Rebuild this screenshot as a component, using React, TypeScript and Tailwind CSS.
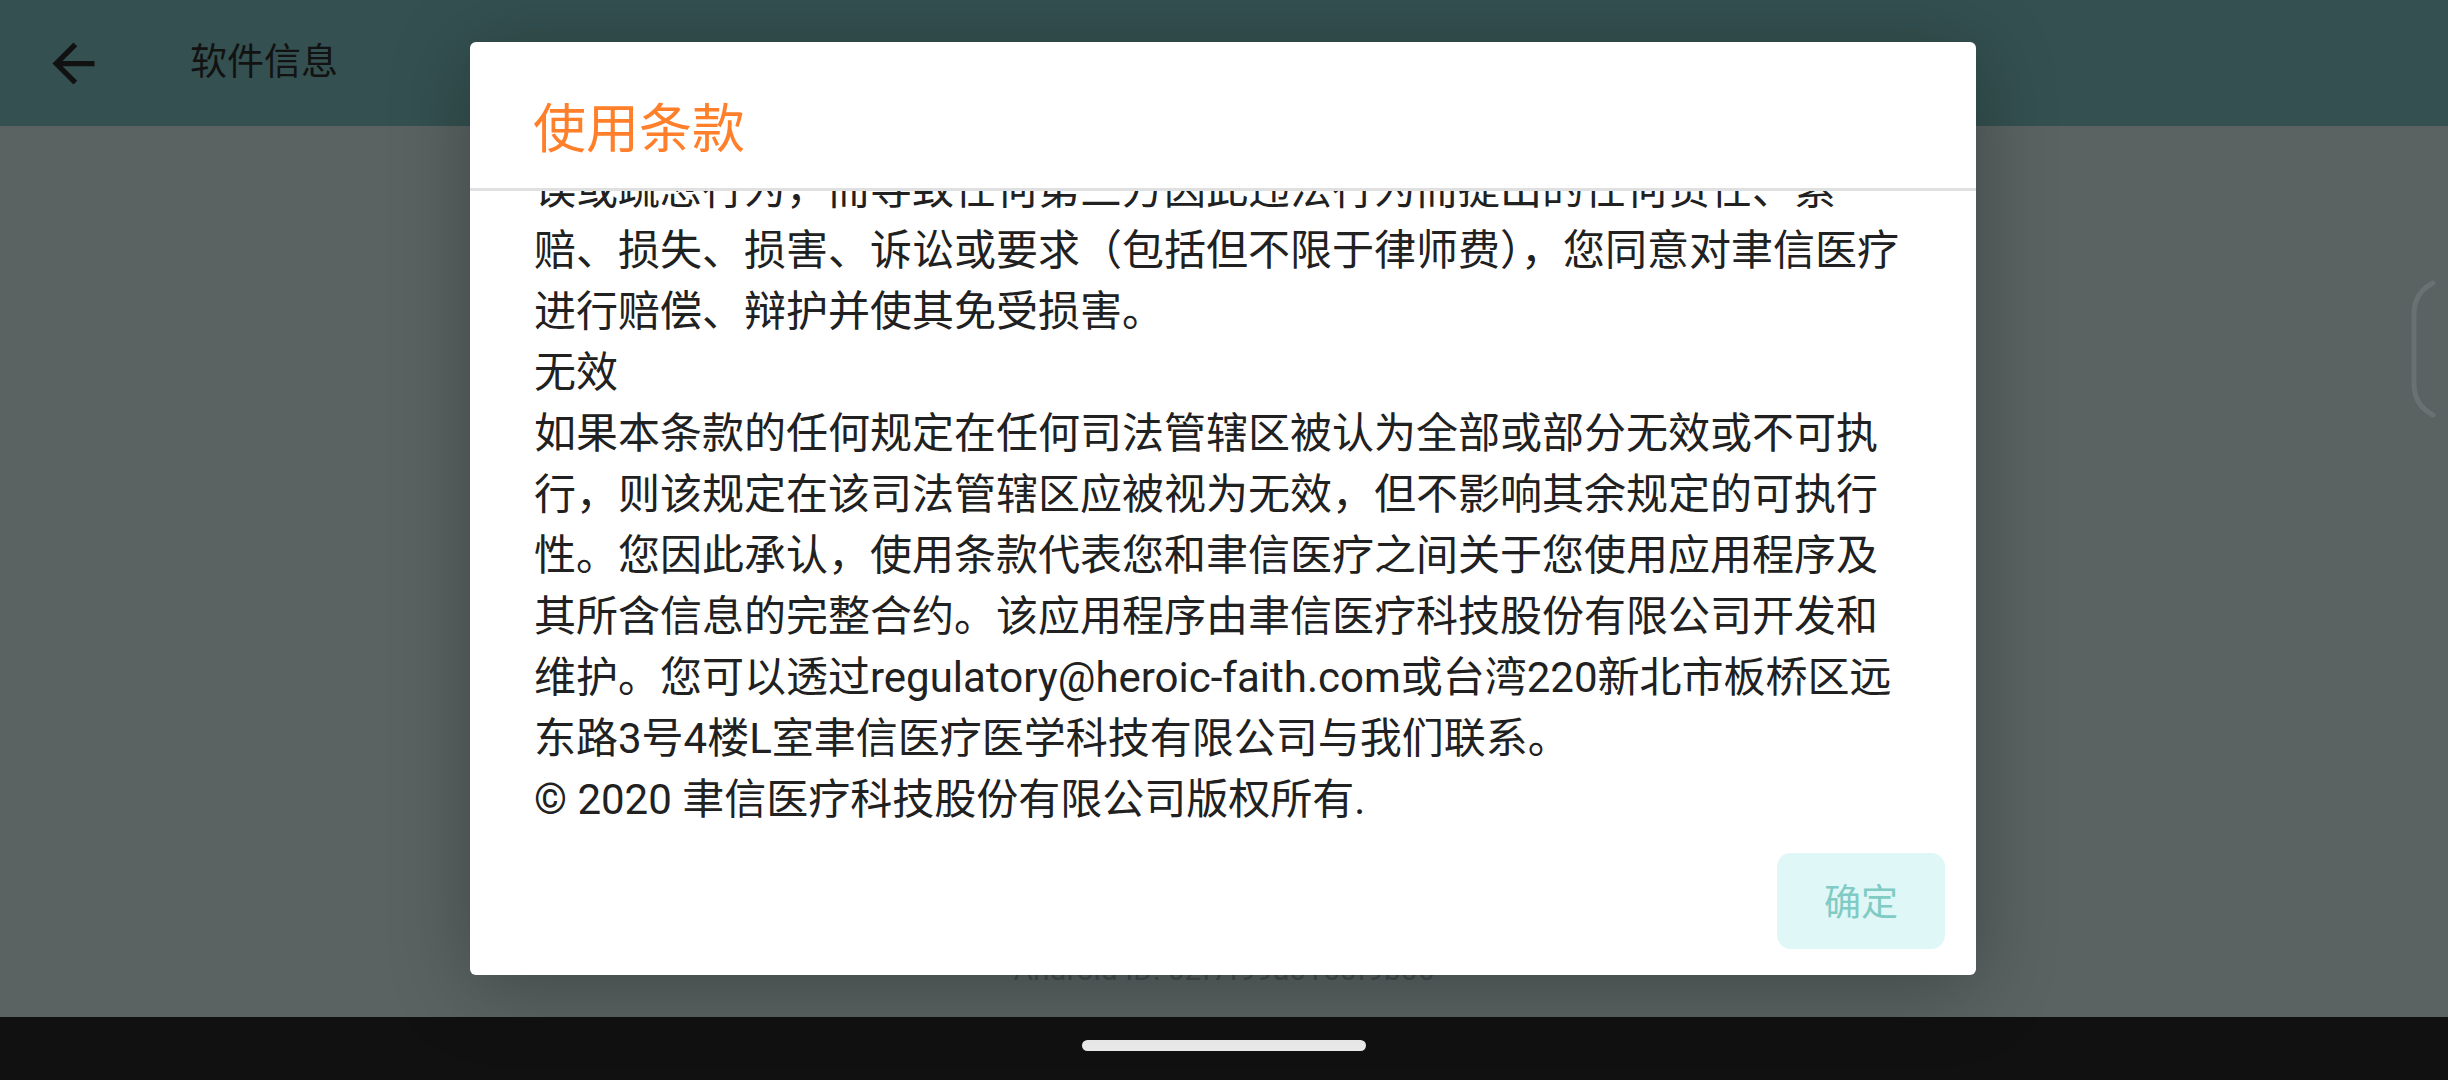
import React from 'react'

// 使用条款 正文（按截图换行）
const termsLines = [
    '误或疏忽行为，而导致任何第三方因此违法行为而提出的任何责任、索',
    '赔、损失、损害、诉讼或要求（包括但不限于律师费），您同意对聿信医疗',
    '进行赔偿、辩护并使其免受损害。',
    '无效',
    '如果本条款的任何规定在任何司法管辖区被认为全部或部分无效或不可执',
    '行，则该规定在该司法管辖区应被视为无效，但不影响其余规定的可执行',
    '性。您因此承认，使用条款代表您和聿信医疗之间关于您使用应用程序及',
    '其所含信息的完整合约。该应用程序由聿信医疗科技股份有限公司开发和',
    '维护。您可以透过regulatory@heroic-faith.com或台湾220新北市板桥区远',
    '东路3号4楼L室聿信医疗医学科技有限公司与我们联系。',
    '© 2020 聿信医疗科技股份有限公司版权所有.',
]

const font = { fontFamily: 'Roboto, "Noto Sans CJK SC", sans-serif' }

const BackArrow = () => (
    <svg width="63" height="63" viewBox="0 0 24 24" fill="#111111">
        <path d="M20 11H7.83l5.59-5.59L12 4l-8 8 8 8 1.41-1.41L7.83 13H20v-2z" />
    </svg>
)

const App = () => {
    return (
        <div className="relative w-[2448px] h-[1080px] overflow-hidden flex flex-col bg-[#5a6262]" style={font}>
            {/* top bar */}
            <div className="h-[126px] shrink-0 bg-[#345050] flex items-center pl-[42px]">
                <BackArrow />
                <div className="ml-[85px] text-[37px] text-[#121212]">软件信息</div>
            </div>
            {/* top bar */}
            {/* page content behind dialog */}
            <div className="flex-1 flex flex-col justify-end items-center pb-[29px]">
                <div className="text-[30px] leading-[36px] text-[#444b4b]">Android ID: 02f7f99a0160f9b06</div>
            </div>
            {/* nav bar */}
            <div className="h-[63px] shrink-0 bg-[#111111] flex justify-center pt-[23px]">
                <div className="w-[284px] h-[11px] rounded-full bg-[#ebebeb]" />
            </div>

            {/* edge swipe hint */}
            <svg className="absolute left-[2406px] top-[276px]" width="34" height="146" viewBox="0 0 34 146">
                <path d="M27 7 Q8 17 8 38 L8 108 Q8 129 27 139" fill="none" stroke="#687272" strokeWidth="5" strokeLinecap="round" />
            </svg>

            {/* dialog */}
            <div className="absolute left-[470px] top-[42px] w-[1506px] h-[933px] bg-white rounded-[6px] flex flex-col shadow-[0_12px_80px_rgba(0,0,0,0.28)]">
                <div className="h-[146px] shrink-0 pl-[63px] pt-[58px]">
                    <div className="text-[53px] leading-[60px] text-[#ff7f2a]">使用条款</div>
                </div>
                <div className="h-[3px] shrink-0 bg-[#e0e0e0]" />
                <div className="flex-1 overflow-hidden pl-[64px]">
                    <div className="-mt-[32px]">
                        {termsLines.map((line, index) => (
                            <div key={index} className="h-[61px] leading-[61px] text-[42px] text-[#212121] whitespace-nowrap">
                                {line}
                            </div>
                        ))}
                    </div>
                </div>
                <div className="shrink-0 flex justify-end pt-[16px] pb-[26px] pr-[31px]">
                    <button className="w-[168px] h-[96px] rounded-[14px] bg-[#e0f7f7] text-[37px] text-[#80cbc4] flex items-center justify-center pt-[5px]">
                        确定
                    </button>
                </div>
            </div>
        </div>
    )
}

export default App
